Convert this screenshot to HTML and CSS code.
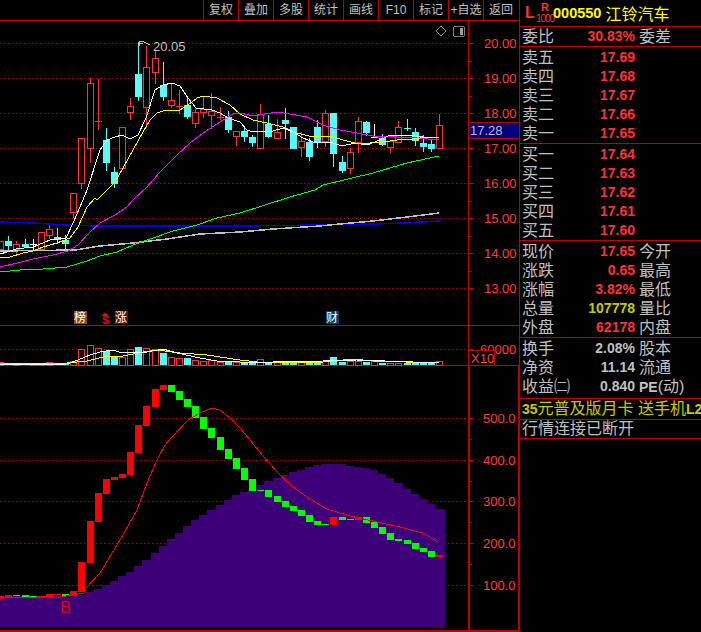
FILE: index.html
```html
<!DOCTYPE html>
<html lang="zh-CN">
<head>
    <meta charset="UTF-8">
    <title>000550 江铃汽车</title>
    <link rel="stylesheet" href="styles.css">
</head>
<body>

    <div class="chart">
        <div class="toolbar">
            <span class="tool">复权</span>
            <span class="tool">叠加</span>
            <span class="tool">多股</span>
            <span class="tool">统计</span>
            <span class="tool">画线</span>
            <span class="tool">F10</span>
            <span class="tool">标记</span>
            <span class="tool">+自选</span>
            <span class="tool">返回</span>
        </div>
        <div class="pane pane-main"><svg id="main" width="519" height="304" viewBox="0 21 519 304"></svg></div>
        <div class="pane pane-vol"><svg id="vol" width="519" height="39" viewBox="0 326 519 39"></svg></div>
        <div class="pane pane-ind"><svg id="ind" width="519" height="264" viewBox="0 366 519 264"></svg></div>
    </div>

    <div class="side">
        <div class="sec sec-head">
            <span class="head-l">L</span>
            <span class="head-r"><b>R</b><i>1000</i></span>
            <span class="head-code">000550</span>
            <span class="head-name">江铃汽车</span>
        </div>
        <div class="sec sec-ratio">
            <div class="row"><span>委比</span><b class="red">30.83%</b><span>委差</span></div>
        </div>
        <div class="sec sec-five">
            <div class="row"><span>卖五</span><b class="red">17.69</b></div>
            <div class="row"><span>卖四</span><b class="red">17.68</b></div>
            <div class="row"><span>卖三</span><b class="red">17.67</b></div>
            <div class="row"><span>卖二</span><b class="red">17.66</b></div>
            <div class="row"><span>卖一</span><b class="red">17.65</b></div>
        </div>
        <div class="sec sec-five">
            <div class="row"><span>买一</span><b class="red">17.64</b></div>
            <div class="row"><span>买二</span><b class="red">17.63</b></div>
            <div class="row"><span>买三</span><b class="red">17.62</b></div>
            <div class="row"><span>买四</span><b class="red">17.61</b></div>
            <div class="row"><span>买五</span><b class="red">17.60</b></div>
        </div>
        <div class="sec sec-five">
            <div class="row"><span>现价</span><b class="red">17.65</b><span>今开</span></div>
            <div class="row"><span>涨跌</span><b class="red">0.65</b><span>最高</span></div>
            <div class="row"><span>涨幅</span><b class="red">3.82%</b><span>最低</span></div>
            <div class="row"><span>总量</span><b class="olive">107778</b><span>量比</span></div>
            <div class="row"><span>外盘</span><b class="red">62178</b><span>内盘</span></div>
        </div>
        <div class="sec sec-three">
            <div class="row"><span>换手</span><b>2.08%</b><span>股本</span></div>
            <div class="row"><span>净资</span><b>11.14</b><span>流通</span></div>
            <div class="row"><span>收益㈡</span><b>0.840</b><span><b>PE</b>(动)</span></div>
        </div>
        <div class="sec sec-ad"><b>35</b>元普及版月卡 送手机<b>L2</b></div>
        <div class="sec sec-status">行情连接已断开</div>
    </div>

    <script src="script.js"></script>
</body>
</html>
```

FILE: styles.css
```css
html, body {
    margin: 0;
    height: 100%;
    background-color: #000;
    overflow: hidden;
}

body {
    display: flex;
    font-family: "Liberation Sans", "Noto Sans CJK SC", sans-serif;
    color: #c0c0c0;
}

/* Chart column */
.chart {
    width: 519px;
    border-right: 1px solid #c00000;
}

.toolbar {
    display: flex;
    justify-content: flex-end;
    height: 20px;
    padding-right: 1px;
    border-bottom: 1px solid #c00000;
}

.tool {
    width: 35px;
    box-sizing: border-box;
    border-left: 1px solid #c00000;
    font-size: 12px;
    line-height: 20px;
    text-align: center;
}

.pane svg {
    display: block;
    overflow: visible;
    shape-rendering: crispEdges;
}

.pane-main,
.pane-vol {
    border-bottom: 1px solid #c00000;
}

.pane-ind {
    border-bottom: 2px solid #c00000;
}

.grid {
    stroke: #c00000;
    stroke-dasharray: 1 3;
}

.line {
    fill: none;
    stroke-width: 1;
}

.thick {
    stroke-width: 1.5;
}

.axis {
    stroke: #c00000;
}

.up {
    fill: #000;
    stroke: #ff3232;
}

.down {
    fill: #54fcfc;
}

.wick-up {
    stroke: #ff3232;
}

.wick-down {
    stroke: #54fcfc;
}

.wick-flat {
    stroke: #fff;
}

.label {
    font-size: 13px;
    fill: #ff3c3c;
    text-rendering: geometricPrecision;
}

.peak {
    font-size: 13px;
    fill: #c0c0c0;
}

.tag {
    font-size: 12px;
    fill: #fff;
}

.tag-s {
    font-size: 11px;
    font-weight: bold;
    fill: #ff0000;
}

.buy {
    font-size: 16px;
    fill: #e00000;
}

/* Quote column */
.side {
    flex: 1;
    font-size: 16px;
}

.sec {
    box-sizing: border-box;
    border-bottom: 1px solid #c00000;
}

.sec-head {
    display: flex;
    align-items: center;
    height: 27px;
    padding-left: 5px;
}

.head-l {
    width: 12px;
    color: #ff3232;
    font-weight: bold;
    font-size: 16px;
}

.head-r {
    display: flex;
    flex-direction: column;
    align-items: center;
    width: 16px;
    color: #ff3232;
    line-height: 12px;
}

.head-r b {
    font-size: 11px;
}

.head-r i {
    font-size: 10px;
    font-style: normal;
    letter-spacing: -1px;
}

.head-code {
    margin-right: 4px;
    color: #ffff00;
    font-weight: bold;
    font-size: 14.5px;
}

.head-name {
    color: #ffff00;
}

.sec-ratio {
    height: 20px;
}

.sec-five {
    height: 97px;
    padding-top: 1px;
}

.sec-three {
    height: 61px;
    padding-top: 1px;
}

.row {
    display: grid;
    grid-template-columns: 50px 59px auto;
    column-gap: 4px;
    height: 19px;
    padding-left: 2px;
    line-height: 19px;
    white-space: nowrap;
}

.row b {
    font-size: 14px;
    text-align: right;
}

.row span b {
    font-size: 14px;
}

.red {
    color: #ff3232;
}

.olive {
    color: #c8c800;
}

.sec-ad {
    height: 21px;
    padding-left: 2px;
    color: #c8c800;
    line-height: 20px;
    white-space: nowrap;
}

.sec-ad b {
    font-size: 14px;
}

.sec-status {
    height: 19px;
    padding-left: 2px;
    line-height: 18px;
}
```

FILE: script.js
```js
// column position, same grid for candles, volume and indicator bars
function left(i) {
    return Math.floor(8.128 * i - 2.35);
}

function hline(y, x1, x2, cls) {
    return `<line x1="${x1}" x2="${x2}" y1="${y + 0.5}" y2="${y + 0.5}" class="${cls}"/>`;
}

function vline(x, y1, y2, cls) {
    return `<line x1="${x + 0.5}" x2="${x + 0.5}" y1="${y1}" y2="${y2}" class="${cls}"/>`;
}

function poly(points, color, extra) {
    return `<polyline points="${points}" stroke="${color}" class="line ${extra || ''}"/>`;
}

function label(x, y, text) {
    return `<text x="${x}" y="${y}" class="label">${text}</text>`;
}

// type, high, body top, body bottom, low
const candles = [
    ['u', 241, 241, 249, 249], ['d', 236, 241, 245, 249], ['u', 241, 244, 249, 252], ['d', 239, 244, 246, 247],
    ['f', 239, 244, 244, 249], ['u', 232, 232, 249, 249], ['u', 224, 229, 235, 238], ['d', 228, 237, 239, 243],
    ['d', 235, 240, 243, 248], ['u', 193, 193, 212, 217], ['u', 138, 138, 183, 188], ['u', 78, 83, 148, 162],
    ['x', 79, 121, 121, 129], ['d', 128, 140, 162, 170], ['d', 167, 172, 183, 187], ['u', 127, 127, 168, 168],
    ['u', 98, 106, 112, 119], ['d', 42, 74, 96, 100], ['u', 46, 67, 107, 127], ['u', 50, 58, 72, 83],
    ['d', 62, 85, 96, 100], ['u', 83, 100, 105, 107], ['x', 90, 106, 106, 113], ['d', 97, 105, 116, 118],
    ['u', 107, 112, 123, 127], ['u', 97, 109, 112, 117], ['u', 93, 111, 115, 128], ['x', 107, 117, 117, 119],
    ['d', 111, 117, 129, 132], ['u', 131, 131, 136, 145], ['d', 127, 131, 136, 141], ['d', 135, 137, 142, 146],
    ['u', 104, 114, 148, 148], ['d', 115, 124, 136, 137], ['u', 119, 132, 138, 138], ['d', 108, 120, 123, 138],
    ['d', 127, 127, 148, 148], ['u', 132, 141, 147, 156], ['d', 138, 142, 156, 160], ['d', 120, 127, 142, 147],
    ['u', 110, 113, 141, 146], ['d', 113, 113, 153, 166], ['d', 156, 162, 170, 172], ['u', 148, 152, 168, 173],
    ['u', 117, 121, 142, 152], ['d', 121, 122, 132, 135], ['f', 124, 137, 137, 137], ['d', 134, 138, 144, 145],
    ['u', 141, 141, 147, 152], ['u', 121, 127, 142, 142], ['c', 119, 128, 128, 130], ['d', 128, 132, 140, 145],
    ['d', 135, 143, 146, 151], ['d', 140, 144, 148, 151], ['u', 114, 125, 148, 148]
];

const volumes = [
    362, 363, 364, 363, 364, 363, 362, 363, 363, 361, 349, 345, 348, 351, 357, 357, 349, 347, 348, 349,
    353, 357, 358, 358, 360, 361, 360, 362, 361, 362, 363, 362, 359, 362, 362, 362, 362, 362, 362, 362,
    361, 357, 362, 361, 361, 362, 361, 363, 363, 363, 363, 363, 363, 363, 361
];

// body top, body bottom, r = red, g = green
const bars = [
    [596, 599, 'r'], [595, 597, 'r'], [595, 596, 'g'], [595, 597, 'g'], [596, 597, 'g'], [596, 597, 'r'], [594, 597, 'r'],
    [594, 595, 'r'], [594, 596, 'g'], [591, 596, 'r'], [562, 592, 'r'], [521, 563, 'r'], [493, 522, 'r'], [479, 494, 'r'],
    [477, 480, 'r'], [474, 478, 'r'], [452, 475, 'r'], [425, 453, 'r'], [406, 426, 'r'], [389, 407, 'r'], [385, 390, 'r'],
    [385, 392, 'g'], [391, 400, 'g'], [399, 407, 'g'], [406, 418, 'g'], [417, 429, 'g'], [428, 438, 'g'], [437, 450, 'g'],
    [449, 459, 'g'], [458, 469, 'g'], [468, 480, 'g'], [479, 491, 'g'], [490, 491, 'g'], [490, 497, 'g'], [496, 502, 'g'],
    [501, 507, 'g'], [506, 511, 'g'], [510, 516, 'g'], [515, 522, 'g'], [521, 525, 'g'], [524, 525, 'g'], [517, 525, 'r'],
    [517, 520, 'g'], [519, 520, 'g'], [517, 520, 'r'], [517, 523, 'g'], [522, 528, 'g'], [527, 534, 'g'], [533, 540, 'g'],
    [539, 541, 'g'], [540, 544, 'g'], [543, 549, 'g'], [548, 552, 'g'], [551, 557, 'g'], [555, 557, 'r']
];

const area = [
    596, 596, 596, 596, 596, 596, 596, 596, 596, 595, 595, 592, 589, 585, 581, 576, 572, 566, 560, 553,
    546, 539, 533, 526, 520, 515, 510, 505, 500, 495, 492, 490, 485, 481, 478, 475, 472, 470, 467, 465,
    464, 464, 464, 466, 467, 468, 470, 474, 478, 483, 489, 494, 499, 504, 509
];

// main pane
let main = '';
[43, 78, 113, 148, 183, 218, 253, 288].forEach((y, i) => {
    main += hline(y, 0, 468, 'grid') + hline(y, 469, 474, 'axis');
    main += label(484, y + 5, (20 - i).toFixed(2) );
});
[61, 96, 131, 166, 201, 236, 271].forEach(y => { main += hline(y, 469, 472, 'axis'); });
main += vline(468, 21, 325, 'axis');

candles.forEach((c, i) => {
    const x = left(i), mid = x + 3;
    const [type, high, top, bottom, low] = c;
    if (type === 'u') {
        main += vline(mid, high, low + 1, 'wick-up');
        main += `<rect x="${x + 0.5}" y="${top + 0.5}" width="6" height="${bottom - top}" class="up"/>`;
    } else if (type === 'd') {
        main += vline(mid, high, low + 1, 'wick-down');
        main += `<rect x="${x}" y="${top}" width="7" height="${bottom - top + 1}" class="down"/>`;
    } else {
        // small cross, the colour depends on the day
        const cls = type === 'x' ? 'wick-up' : type === 'c' ? 'wick-down' : 'wick-flat';
        main += vline(mid, high, low + 1, cls) + hline(top, x, x + 7, cls);
    }
});

main += poly('0,222 33,223 67,225 97,226 240,226 320,225 373,224 407,223 439,221', '#0000e0', 'thick');
main += poly('0,251 75,250 100,246 133,243 167,239 200,234 240,232 273,229 320,226 340,224 373,221 407,217 439,213', '#c0c0c0', 'thick');
main += poly('0,272 20,270 43,269 67,267 87,261 100,256 117,252 133,245 153,238 173,231 197,225 217,218 240,213 265,205 290,197 315,190 323,185 373,173 407,163 439,156', '#00ff00');
main += poly('0,267 17,263 33,259 53,255 68,251 78,245 90,232 100,223 115,215 127,207 133,200 147,187 160,172 177,155 190,143 203,133 220,122 233,114 240,113 253,116 265,114 277,112 290,114 307,117 323,125 340,130 357,133 373,136 397,137 417,138 439,140', '#ff00ff');
main += poly('0,258 10,257 23,253 33,251 43,247 57,243 70,238 78,227 87,207 95,198 97,200 115,182 123,168 133,150 143,132 150,120 157,113 163,111 180,110 188,105 197,98 203,96 217,98 230,105 240,114 253,120 267,123 283,127 297,133 313,137 330,136 343,140 355,143 370,143 383,142 397,140 413,139 427,137 439,137', '#ffff00');
main += poly('0,254 7,252 16,249 33,247 50,240 66,238 73,223 80,207 87,190 100,150 107,140 115,137 122,135 130,139 138,135 146,118 155,90 163,85 172,83 180,86 188,98 196,108 204,109 212,110 220,113 228,118 240,122 247,130 253,132 273,131 283,128 293,132 303,138 313,142 330,142 342,146 355,143 367,145 380,140 388,136 407,135 423,137 439,138', '#ffffff');

// highest price marker
main += '<path d="M139.5 41.5h4M139.5 43.5h3M139.5 41v5M144 42l6 3" stroke="#c0c0c0" fill="none"/>';
main += '<text x="153" y="51" class="peak">20.05</text>';

// news tags under the candles
main += '<rect x="74" y="311" width="13" height="13" fill="#8a4a10"/><text x="74" y="322" class="tag">榜</text>';
main += '<polygon points="105,312 102,316 108,316" fill="#ff0000"/><text x="102" y="324" class="tag-s">S</text>';
main += '<rect x="115" y="311" width="13" height="13" fill="#7a0808"/><text x="115" y="322" class="tag">涨</text>';
main += '<rect x="326" y="311" width="13" height="13" fill="#0a3a66"/><text x="326" y="322" class="tag">财</text>';

// diamond and panel buttons
main += '<polygon points="441,26 446,31 441,36 436,31" fill="none" stroke="#808080"/>';
main += '<rect x="453.5" y="26.5" width="11" height="10" rx="2" fill="none" stroke="#808080"/><rect x="460" y="28" width="3" height="7" fill="#a0a0a0"/>';

// current price box on the axis
main += '<rect x="469" y="123" width="50" height="15" fill="#000080"/>';
main += hline(122, 469, 519, 'axis') + hline(138, 469, 519, 'axis');
main += '<text x="470" y="135" class="peak">17.28</text>';
document.getElementById('main').innerHTML = main;

// volume pane
let vol = hline(349, 0, 468, 'grid') + vline(468, 326, 365, 'axis') + hline(349, 469, 474, 'axis');
vol += label(480, 354, '60000');
volumes.forEach((top, i) => {
    const c = candles[i][0];
    const x = left(i);
    if (c === 'd' || c === 'c') {
        vol += `<rect x="${x}" y="${top}" width="7" height="${365 - top}" class="down"/>`;
    } else {
        vol += `<rect x="${x + 0.5}" y="${top + 0.5}" width="6" height="${365 - top}" class="up"/>`;
    }
});
vol += poly('0,364 67,363 87,361 103,357 123,356 143,352 157,350 180,353 207,355 240,360 257,362 323,362 353,359 373,361 439,363', '#ffff00');
vol += poly('0,365 67,364 78,360 90,355 100,352 112,350 123,353 147,352 163,349 177,353 200,358 217,361 240,362 273,362 323,361 357,360 413,362 439,363', '#ffffff');
vol += '<rect x="468.5" y="350.5" width="26" height="15" fill="#000" stroke="#c00000"/>';
vol += '<text x="471" y="363" class="label">X10</text>';
document.getElementById('vol').innerHTML = vol;

// indicator pane
let ind = '';
[418, 460, 501, 543, 585].forEach((y, i) => {
    ind += hline(y, 0, 468, 'grid') + hline(y, 470, 474, 'axis');
    ind += label(483, y + 5, (500 - i * 100).toFixed(1));
});
[439, 481, 522, 564].forEach(y => { ind += hline(y, 470, 472, 'axis'); });
ind += `<rect x="468" y="366" width="2" height="264" fill="#c00000"/><rect x="518" y="366" width="1" height="264" fill="#c00000"/>`;

area.forEach((top, i) => {
    const x = left(i) - 1;
    const end = i === 54 ? 445 : left(i + 1) - 1;
    ind += `<rect x="${x}" y="${top}" width="${end - x}" height="${627 - top}" fill="#3e0078"/>`;
});
bars.forEach((b, i) => {
    const fill = b[2] === 'r' ? '#ff0000' : '#00ff00';
    ind += `<rect x="${left(i)}" y="${b[0]}" width="7" height="${b[1] - b[0]}" fill="${fill}"/>`;
});
ind += poly('0,597 60,597 84,593 86,588 100,573 120,540 137,510 147,483 157,460 165,445 172,437 188,420 200,413 212,408 220,410 230,418 240,428 250,440 263,456 277,472 293,487 310,499 327,509 350,516 377,522 400,527 423,533 438,542', '#ff0000');
ind += '<text x="60" y="613" class="buy">B</text>';
document.getElementById('ind').innerHTML = ind;
```
